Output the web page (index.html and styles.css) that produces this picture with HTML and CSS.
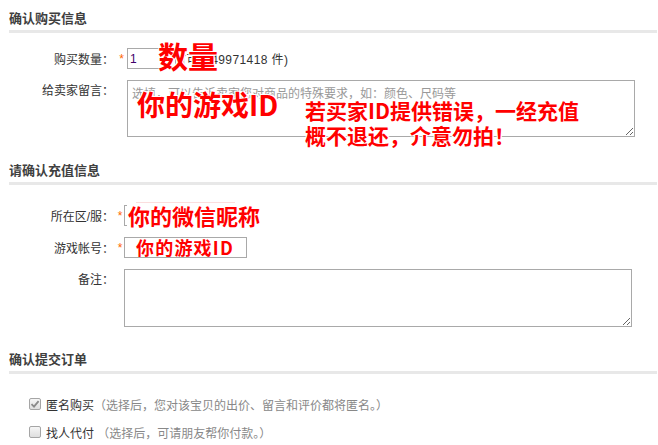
FILE: index.html
```html
<!DOCTYPE html>
<html lang="zh-CN">
<head>
  <meta charset="UTF-8" />
  <meta name="viewport" content="width=device-width, initial-scale=1.0"/>
  <title>确认订单</title>
  <link rel="stylesheet" href="styles.css">
</head>
<body>

  <div class="page">
    <h3 class="title">确认购买信息</h3>

    <div class="row row-qty">
      <label class="row-label">购买数量：</label>
      <span class="req">*</span>
      <input type="text" class="qty" value="1">
      <span class="stock">(可售49971418 件)</span>
    </div>

    <div class="row row-area">
      <label class="row-label">给卖家留言：</label>
      <span class="req"></span>
      <textarea class="memo memo-seller" placeholder="选填，可以告诉卖家您对商品的特殊要求，如：颜色、尺码等"></textarea>
    </div>

    <h3 class="title title-gap">请确认充值信息</h3>

    <div class="charge">
      <div class="row row-field">
        <label class="row-label">所在区/服：</label>
        <span class="req">*</span>
        <input type="text" class="field">
      </div>

      <div class="row row-field">
        <label class="row-label">游戏帐号：</label>
        <span class="req">*</span>
        <div class="field field-id">你的游戏ID</div>
      </div>

      <div class="row row-area">
        <label class="row-label">备注：</label>
        <span class="req"></span>
        <textarea class="memo memo-note"></textarea>
      </div>
    </div>

    <h3 class="title title-last">确认提交订单</h3>

    <div class="checks">
      <div class="check">
        <span class="box box-on">
          <svg width="10" height="10" viewBox="0 0 10 10"><path d="M1.5 5.2 L4 7.6 L8.6 2.2" fill="none" stroke="#8a8a8a" stroke-width="1.8"/></svg>
        </span>
        <span class="check-name">匿名购买</span><span class="hint">（选择后，您对该宝贝的出价、留言和评价都将匿名。）</span>
      </div>
      <div class="check">
        <span class="box"></span>
        <span class="check-name">找人代付</span><span class="hint"> （选择后，可请朋友帮你付款。）</span>
      </div>
    </div>

    <!-- red notes drawn over the form -->
    <span class="mark mark-qty">数量</span>
    <span class="mark mark-id">你的游戏ID</span>
    <span class="mark mark-warn">若买家ID提供错误，一经充值<br>概不退还，介意勿拍！</span>
    <span class="mark mark-wx">你的微信昵称</span>
  </div>

</body>
</html>
```

FILE: styles.css
```css
* {
  box-sizing: border-box;
}
body {
  margin: 0;
  font-family: "Liberation Sans", "Noto Sans CJK SC", sans-serif;
  font-size: 12px;
  color: #333;
  background: #fff;
}
.page {
  position: relative;
  padding: 0 1px 0 9px;
}
.title {
  margin: 0;
  padding-top: 8px;
  line-height: 22px;
  font-size: 13px;
  font-weight: bold;
  color: #404040;
  border-bottom: 3px solid #e8e8e8;
}
.title-gap {
  margin-top: 15px;
}
.title-last {
  margin-top: 14px;
}
.row {
  display: flex;
}
.row-label {
  width: 105px;
  text-align: right;
  color: #333;
}
.req {
  width: 13px;
  text-align: center;
  color: #f60;
  padding-left: 2px;
}
.charge .req {
  width: 10px;
}
.row-qty {
  margin-top: 15px;
  align-items: center;
  height: 21px;
}
.row-area {
  margin-top: 11px;
  align-items: flex-start;
}
.row-area .row-label {
  line-height: 22px;
}
.qty {
  width: 49px;
  height: 21px;
  padding: 0 2px;
  border: 1px solid #a9a9a9;
  font-family: inherit;
  font-size: 12px;
  color: #40006a;
  outline: none;
}
.stock {
  margin-left: 6px;
  letter-spacing: 0.4px;
}
.memo {
  display: block;
  width: 508px;
  padding: 3px 4px;
  border: 1px solid #a9a9a9;
  font-family: inherit;
  font-size: 12px;
  color: #333;
  outline: none;
}
.memo::placeholder {
  color: #999;
}
.memo-seller {
  height: 57px;
}
.memo-note {
  height: 58px;
}
.charge .row-field:first-child {
  margin-top: 20px;
}
.row-field {
  margin-top: 11px;
  align-items: center;
  height: 21px;
}
.field {
  width: 123px;
  height: 21px;
  border: 1px solid #a9a9a9;
  outline: none;
}
.field-id {
  padding-left: 11px;
  font-family: "Noto Sans CJK SC", sans-serif;
  font-size: 18px;
  font-weight: bold;
  line-height: 19px;
  letter-spacing: 1.2px;
  color: #f00;
}
.checks {
  margin-top: 16px;
  padding-left: 20px;
}
.check {
  display: flex;
  align-items: center;
  height: 28px;
}
.box {
  width: 12px;
  height: 12px;
  margin-right: 5px;
  border: 1px solid #a5a5a5;
  border-radius: 2px;
  background: linear-gradient(#f6f6f6, #dedede);
  display: flex;
  align-items: center;
  justify-content: center;
}
.check-name {
  color: #333;
}
.hint {
  color: #888;
  white-space: pre;
}
.mark {
  position: absolute;
  font-family: "Noto Sans CJK SC", sans-serif;
  font-weight: bold;
  color: #f00;
  line-height: 1;
  white-space: nowrap;
  text-shadow: 1px 1px 0 #fff, -1px -1px 0 #fff, 1px -1px 0 #fff, -1px 1px 0 #fff;
}
.mark-qty {
  left: 158px;
  top: 40px;
  font-size: 30px;
}
.mark-id {
  left: 137px;
  top: 90px;
  font-size: 28px;
}
.mark-warn {
  left: 305px;
  top: 98px;
  font-size: 21px;
  line-height: 25px;
}
.mark-wx {
  left: 127px;
  top: 203px;
  padding: 1px 0 4px 1px;
  font-size: 22px;
  background: #fff;
}
.mark-wx::before {
  content: "";
  position: absolute;
  left: 9px;
  top: -1px;
  width: 99px;
  border-top: 1px solid #fbdede;
}
```
